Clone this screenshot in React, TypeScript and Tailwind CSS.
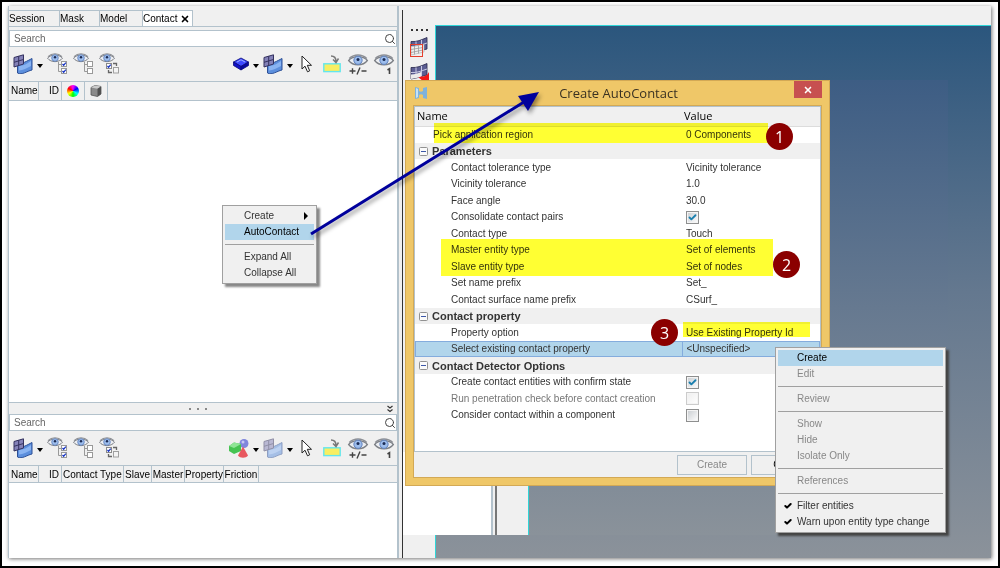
import React from "react";
import { Search, X, Check } from "lucide-react";

type Row = {
  kind: "pick" | "group" | "item";
  name: string;
  value?: string;
  check?: boolean;
  disabled?: boolean;
  selected?: boolean;
};

const rows: Row[] = [
  { kind: "pick", name: "Pick application region", value: "0 Components" },
  { kind: "group", name: "Parameters" },
  { kind: "item", name: "Contact tolerance type", value: "Vicinity tolerance" },
  { kind: "item", name: "Vicinity tolerance", value: "1.0" },
  { kind: "item", name: "Face angle", value: "30.0" },
  { kind: "item", name: "Consolidate contact pairs", check: true },
  { kind: "item", name: "Contact type", value: "Touch" },
  { kind: "item", name: "Master entity type", value: "Set of elements" },
  { kind: "item", name: "Slave entity type", value: "Set of nodes" },
  { kind: "item", name: "Set name prefix", value: "Set_" },
  { kind: "item", name: "Contact surface name prefix", value: "CSurf_" },
  { kind: "group", name: "Contact property" },
  { kind: "item", name: "Property option", value: "Use Existing Property Id" },
  { kind: "item", name: "Select existing contact property", value: "<Unspecified>", selected: true },
  { kind: "group", name: "Contact Detector Options" },
  { kind: "item", name: "Create contact entities with confirm state", check: true },
  { kind: "item", name: "Run penetration check before contact creation", check: false, disabled: true },
  { kind: "item", name: "Consider contact within a component", check: false },
];

/* ---------- icons ---------- */

function Mesh({ faded }: { faded?: boolean }) {
  return (
    <svg viewBox="0 0 20 20" className={faded ? "size-5 opacity-50" : "size-5"}>
      <path d="M4.500 8.500C9 10.500 14 7 19 4.500V16C14 17 9 21.500 4.500 19Z" fill="#5c8fdd" stroke="#2c4f96" />
      <path d="M6 11.500C10 12.500 14 9.500 18 7V12C14 14 10 16.500 6 16.500Z" fill="#8ab4f2" />
      <path d="M1 3.500 10.500 .8V10L1 13Z" fill="#8482b8" stroke="#34325f" />
      <path d="M5.700 2.200V11.500M1 8.300 10.500 5.500" stroke="#34325f" fill="none" />
    </svg>
  );
}

function Caret() {
  return (
    <svg viewBox="0 0 6 4" className="mt-1 h-1 w-1.5 shrink-0">
      <path d="M0 0H6L3 4Z" fill="#000" />
    </svg>
  );
}

function EyeShape() {
  return (
    <>
      <path d="M.5 5.200C4 1 12 1 15.500 5.200 12 9.800 4 9.800 .5 5.200Z" fill="#eceef2" stroke="#7d8086" />
      <path d="M1 3.600C5 -.2 11 -.2 15 3.600" fill="none" stroke="#8d9096" strokeWidth="1.200" />
      <circle cx="8" cy="5" r="3.300" fill="#9dbdec" stroke="#5c7fbd" strokeWidth=".8" />
      <circle cx="8" cy="4.300" r="1.200" fill="#1c2c55" />
    </>
  );
}

function EyeTree({ mode }: { mode: "on" | "off" | "swap" }) {
  return (
    <svg viewBox="0 0 22 22" className="h-[22px] w-[22px]">
      <EyeShape />
      {mode === "swap" ? (
        <>
          <rect x="7.500" y="10.500" width="5" height="5" fill="#fff" stroke="#8a8a8a" />
          <path d="M8.500 13 9.600 14.300 11.700 11.700" fill="none" stroke="#1633c4" strokeWidth="1.300" />
          <rect x="14.500" y="14.500" width="5" height="5.500" fill="#f4f4f4" stroke="#a0a0a0" />
          <path d="M14 10.500H17.500V13M13 19.500H9.500V17" fill="none" stroke="#666" strokeWidth="1.300" />
        </>
      ) : (
        <>
          <path d="M11.500 9V18.500M11.500 11.500H14M11.500 18.500H14" fill="none" stroke="#999" />
          <rect x="14.500" y="8.500" width="5" height="5" fill="#fff" stroke="#999" />
          <rect x="14.500" y="15.500" width="5" height="5" fill="#fff" stroke="#999" />
          {mode === "on" && (
            <path
              d="M15.500 11 16.700 12.300 18.800 9.700M15.500 18 16.700 19.300 18.800 16.700"
              fill="none"
              stroke="#1633c4"
              strokeWidth="1.300"
            />
          )}
        </>
      )}
    </svg>
  );
}

function EyeMark({ mark }: { mark: "pm" | "one" }) {
  return (
    <svg viewBox="0 0 22 22" className="h-[22px] w-[22px]">
      <g transform="translate(1 1) scale(1.25)">
        <EyeShape />
      </g>
      {mark === "pm" ? (
        <path d="M2.500 18H8.500M5.500 15.300V20.700M10 21.500 13 14.500M14.500 18H19.500" stroke="#444" strokeWidth="1.400" fill="none" />
      ) : (
        <path d="M14.500 17 16.500 15.700V21" stroke="#444" strokeWidth="1.600" fill="none" />
      )}
    </svg>
  );
}

function Block() {
  return (
    <svg viewBox="0 0 16 14" className="h-3.5 w-4">
      <path d="M.5 5 8 1 15.500 5 8 9.500Z" fill="#3d49ff" stroke="#0a0a78" strokeWidth=".8" />
      <path d="M.5 5V8.500L8 13V9.500Z" fill="#1212c8" stroke="#0a0a78" strokeWidth=".8" />
      <path d="M15.500 5V8.500L8 13V9.500Z" fill="#0808a0" stroke="#0a0a78" strokeWidth=".8" />
      <path d="M4 5 8 2.800 12 5" stroke="#a0b0ff" fill="none" />
    </svg>
  );
}

function Shapes() {
  return (
    <svg viewBox="0 0 20 20" className="size-5">
      <circle cx="15" cy="5.500" r="4.500" fill="#7f86dc" />
      <circle cx="14" cy="4" r="1.500" fill="#c3c7f4" />
      <path d="M0 8 5 4.500 12 6V13L5 16 0 13Z" fill="#46c352" />
      <path d="M0 8 5 4.500 12 6 5 10Z" fill="#8fe596" />
      <path d="M14 8.500 19 17.500C17 20.500 11 20.500 9 17.500Z" fill="#e8585f" />
    </svg>
  );
}

function Pointer() {
  return (
    <svg viewBox="0 0 12 18" className="h-[18px] w-3">
      <path d="M1 1V14L4 11.200 6.500 16.800 8.700 15.800 6.300 10.300H10.500Z" fill="#fff" stroke="#222" />
    </svg>
  );
}

function Drop() {
  return (
    <svg viewBox="0 0 18 18" className="size-[18px]">
      <rect x=".8" y="8.800" width="16.400" height="7.800" fill="#f8ee62" stroke="#63e6ee" strokeWidth="1.400" />
      <path d="M8 1C11 1 13 3 13 6.500M10 4.500 13 7.500 15.500 3.500" fill="none" stroke="#777" strokeWidth="1.500" />
    </svg>
  );
}

function Cube() {
  return (
    <svg viewBox="0 0 12 12" className="size-3">
      <path d="M1 2.500 5 .5 11 1.500V9L7.500 11.500 1 10Z" fill="#8a8a8a" stroke="#555" strokeWidth=".8" />
      <path d="M1 2.500 5 .5 11 1.500 7.500 3.800Z" fill="#cacaca" />
      <path d="M7.500 3.800 11 1.500V9L7.500 11.500Z" fill="#505050" />
    </svg>
  );
}

function StripMesh({ red }: { red?: boolean }) {
  return (
    <svg viewBox="0 0 20 20" className="size-5">
      <path d="M2 4.500C8 5 12 3 18 .5V12C13 13 9 15 2 16Z" fill="#5b5d92" stroke="#26264a" strokeWidth=".8" />
      <path d="M7 4.500V15M12.500 3V13.500M2 9.500C8 10 12 8 18 6" stroke="#c9cae4" fill="none" />
      {red ? (
        <>
          <path d="M2 11.500C6 11.500 9 10.500 12 9V14L2 16Z" fill="#ececec" />
          <path d="M20 9C18 13 15 14 12 13.500L9.500 14.500 14 18H20V9Z" fill="#f01818" />
        </>
      ) : (
        <>
          <path d="M2 9.500C6 9.500 10 8.500 15 7V15L2 18Z" fill="#f0f0f0" stroke="#aaa" strokeWidth=".6" />
          <path d="M2 12.500 14 10.500M2 15.500 14 13M5.500 9V17.500M9.500 8.500V16.500" stroke="#9a9a9a" strokeWidth=".8" fill="none" />
          <rect x="1.500" y="7.500" width="12" height="12" fill="none" stroke="#e5402d" />
        </>
      )}
    </svg>
  );
}

/* ---------- browser panel ---------- */

function SearchBox({ id }: { id: string }) {
  return (
    <div className="flex h-[17px] items-center border border-[#b3c2cc] bg-white">
      <input
        id={id}
        aria-label="Search"
        placeholder="Search"
        className="h-full min-w-0 flex-1 bg-transparent px-1 text-[10px] text-black outline-none placeholder:text-[#666]"
      />
      <Search className="size-3 text-[#444]" />
    </div>
  );
}

function Tools({ second }: { second?: boolean }) {
  return (
    <div className="flex h-[34px] items-center pr-0.5 pl-1">
      <button aria-label="Components" className="mr-1 flex items-center gap-1">
        <Mesh />
        <Caret />
      </button>
      <div className="flex gap-1">
        <button aria-label="Show all"><EyeTree mode="on" /></button>
        <button aria-label="Hide all"><EyeTree mode="off" /></button>
        <button aria-label="Reverse"><EyeTree mode="swap" /></button>
      </div>
      <div className="ml-auto flex items-center">
        <button aria-label="Entity" className="flex items-center gap-1">
          {second ? <Shapes /> : <Block />}
          <Caret />
        </button>
        <button aria-label="Mesh" className="ml-1 flex items-center gap-1">
          <Mesh faded={second} />
          <Caret />
        </button>
        <button aria-label="Select" className="ml-2"><Pointer /></button>
        <button aria-label="Add" className="ml-2.5"><Drop /></button>
        <button aria-label="Show or hide" className="ml-1.5"><EyeMark mark="pm" /></button>
        <button aria-label="Isolate" className="ml-1"><EyeMark mark="one" /></button>
      </div>
    </div>
  );
}

function Browser() {
  return (
    <div className="flex w-[391px] shrink-0 flex-col border-r-2 border-l border-[#b3c2cc] pt-1">
      <div className="flex h-4 text-[10px] leading-4">
        <button className="w-[51px] border-t border-r border-[#b3c2cc] text-left">Session</button>
        <button className="w-10 border-t border-r border-[#b3c2cc] text-left">Mask</button>
        <button className="w-[43px] border-t border-r border-[#b3c2cc] text-left">Model</button>
        <button className="flex w-[50px] items-center justify-between border-t border-r border-[#b3c2cc] bg-white pr-0.5">
          Contact <X className="size-2.5 shrink-0" strokeWidth={4} />
        </button>
      </div>
      <div className="mb-[3px] border-b border-[#b3c2cc]" />
      <SearchBox id="search-top" />
      <Tools />
      <div className="flex h-5 border-y border-[#b3c2cc] text-[10px] leading-[18px]">
        <div className="w-[30px] border-r border-[#b3c2cc] pl-0.5">Name</div>
        <div className="w-[23px] border-r border-[#b3c2cc] pr-0.5 text-right">ID</div>
        <div className="flex w-[23px] items-center justify-center border-r border-[#b3c2cc]">
          <span className="size-3 rounded-full bg-[conic-gradient(#f0f,#00f,#0ff,#0f0,#ff0,#f00,#f0f)]" />
        </div>
        <div className="flex w-[23px] items-center justify-center border-r border-[#b3c2cc]"><Cube /></div>
      </div>
      <div className="flex-1 bg-white" />
      <div className="flex h-3 items-center border-t border-[#b3c2cc]">
        <span className="flex flex-1 justify-center gap-1.5">
          <i className="size-0.5 bg-[#888]" />
          <i className="size-0.5 bg-[#888]" />
          <i className="size-0.5 bg-[#888]" />
        </span>
        <svg viewBox="0 0 6 8" className="mr-1 h-2 w-1.5">
          <path d="M.5 1 3 3 5.500 1M.5 4.500 3 6.500 5.500 4.500" stroke="#333" strokeWidth="1.200" fill="none" />
        </svg>
      </div>
      <SearchBox id="search-bottom" />
      <Tools second />
      <div className="flex h-[18px] border-y border-[#b3c2cc] text-[10px] leading-[18px]">
        <div className="w-[30px] border-r border-[#b3c2cc] pl-0.5">Name</div>
        <div className="w-[23px] border-r border-[#b3c2cc] pr-0.5 text-right">ID</div>
        <div className="w-[62px] border-r border-[#b3c2cc] pl-px whitespace-nowrap">Contact Type</div>
        <div className="w-7 border-r border-[#b3c2cc] text-center">Slave</div>
        <div className="w-[33px] border-r border-[#b3c2cc] text-center">Master</div>
        <div className="w-[39px] border-r border-[#b3c2cc] text-center">Property</div>
        <div className="w-[35px] border-r border-[#b3c2cc] text-center">Friction</div>
      </div>
      <div className="h-[75px] bg-white" />
    </div>
  );
}

/* ---------- dialog ---------- */

function Tick({ row }: { row: Row }) {
  return (
    <input
      type="checkbox"
      aria-label={row.name}
      defaultChecked={row.check}
      disabled={row.disabled}
      className="block size-[13px] appearance-none border border-[#8e8f8f] bg-linear-to-br from-[#c8ccd0] to-white shadow-[inset_0_0_0_1px_#f4f4f4] disabled:border-[#ccc] disabled:from-[#eee]"
    />
  );
}

function PropertyRow({ row }: { row: Row }) {
  if (row.kind === "group") {
    return (
      <tr className="bg-[#f0f0f0] odd:h-[17px] even:h-4">
        <th colSpan={2} className="p-0 text-left text-[11px] leading-4 font-bold">
          <span className="flex items-center gap-1 pl-1">
            <svg viewBox="0 0 9 9" className="size-[9px]">
              <rect x=".5" y=".5" width="8" height="8" rx="1" fill="#fafafa" stroke="#919191" />
              <path d="M2 4.500H7" stroke="#3c57a8" />
            </svg>
            {row.name}
          </span>
        </th>
      </tr>
    );
  }
  return (
    <tr className={row.selected ? "bg-[#b1d5eb] outline -outline-offset-1 outline-[#84acdd] odd:h-[17px] even:h-4" : "odd:h-[17px] even:h-4"}>
      <td className={row.kind === "pick" ? "p-0 pl-[18px]" : row.disabled ? "p-0 pl-9 text-[#777]" : "p-0 pl-9"}>{row.name}</td>
      <td className={row.selected ? "border-l border-[#84acdd] p-0 pl-1" : "p-0 pl-1"}>
        {row.check === undefined ? (
          row.value
        ) : (
          <span className="relative block w-[13px]">
            <Tick row={row} />
            {row.check && <Check className="pointer-events-none absolute inset-0.5 size-[9px] text-[#1b7fae]" strokeWidth={5} />}
          </span>
        )}
      </td>
    </tr>
  );
}

function Dialog() {
  return (
    <div className="absolute top-[78px] left-[403px] z-10 w-[425px] border border-[#d3a955] bg-[#efc768] px-[7px] pb-[7px]">
      <div className="flex h-6">
        <svg viewBox="0 0 12 12" className="mt-1.5 ml-0.5 size-3">
          <path d="M0 0 4 1V4C5.500 5 6.500 5 8 4V1L12 0V12L8 11V8C6.500 7 5.500 7 4 8V11L0 12Z" fill="#7fb2dc" />
          <path d="M1 1 3 2V10L1 11Z" fill="#c7e2f5" />
        </svg>
        <h1 className="flex-1 pl-4 text-center font-['Open_Sans',sans-serif] text-[13px] leading-6 text-[#3a3222]">
          Create AutoContact
        </h1>
        <button aria-label="Close" className="flex h-[17px] w-7 items-center justify-center bg-[#c75050] text-white">
          <X className="size-2.5" strokeWidth={4} />
        </button>
      </div>
      <div className="border border-[#d3a955] bg-[#f0f0f0]">
        <div className="h-[346px] border border-[#b3c2cc] bg-white">
          <table className="w-full table-fixed border-collapse text-[10px] leading-4 whitespace-nowrap text-[#333]">
            <thead>
              <tr className="h-[19px] border-b border-[#dcdcdc] bg-[#f0f0f0] font-['Open_Sans',sans-serif] text-[11px] text-black">
                <th className="w-[267px] p-0 pl-0.5 text-left font-normal">Name</th>
                <th className="p-0 pl-0.5 text-left font-normal">Value</th>
              </tr>
            </thead>
            <tbody>
              {rows.map((row) => (
                <PropertyRow key={row.name} row={row} />
              ))}
            </tbody>
          </table>
        </div>
        <div className="flex h-[25px] items-center justify-end gap-1">
          <button disabled className="h-5 w-[70px] border border-[#b3c2cc] text-[10px] text-[#888]">Create</button>
          <button className="h-5 w-[70px] border border-[#b3c2cc] text-[10px]">Close</button>
        </div>
      </div>
    </div>
  );
}

/* ---------- menus ---------- */

function MenuItem({ label, active, disabled, checked, arrow }: {
  label: string;
  active?: boolean;
  disabled?: boolean;
  checked?: boolean;
  arrow?: boolean;
}) {
  return (
    <button
      disabled={disabled}
      className={
        active
          ? "flex w-full items-center bg-[#b1d5eb] text-left text-black"
          : "flex w-full items-center text-left text-[#333] disabled:text-[#888]"
      }
    >
      <span className="flex w-[19px] justify-center">
        {checked && <Check className="size-2 text-black" strokeWidth={6} />}
      </span>
      <span className="flex-1 leading-4">{label}</span>
      {arrow && (
        <svg viewBox="0 0 4 8" className="mr-1.5 h-2 w-1">
          <path d="M0 0 4 4 0 8Z" fill="#000" />
        </svg>
      )}
    </button>
  );
}

const Line = () => <hr className="my-1 border-[#a0a0a0]" />;

function Badge({ n, place }: { n: number; place: string }) {
  return (
    <span
      className={`absolute z-30 flex size-[27px] items-center justify-center rounded-full bg-[#8b0000] font-['Open_Sans',sans-serif] text-base text-white ${place}`}
    >
      {n}
    </span>
  );
}

export default function App() {
  return (
    <div className="relative flex min-h-screen border-2 border-black bg-white pt-1 pr-[7px] pb-2 pl-1.5 font-['Liberation_Sans',sans-serif] text-black">
      <div className="flex flex-1 bg-[#f0f0f0] shadow-[1px_1px_4px_#777]">
        <Browser />
        <div className="mt-1 ml-px w-[3px] border-r border-[#333]" />
        <div className="flex w-8 shrink-0 flex-col items-center gap-1.5 pt-[23px]">
          <span className="flex gap-[3px]">
            <i className="size-0.5 bg-[#333]" />
            <i className="size-0.5 bg-[#333]" />
            <i className="size-0.5 bg-[#333]" />
            <i className="size-0.5 bg-[#333]" />
          </span>
          <button aria-label="Mesh window"><StripMesh /></button>
          <button aria-label="Mesh flip"><StripMesh red /></button>
        </div>
        <div className="mt-[19px] flex-1 border-t border-l border-[#2fd6d8] bg-linear-to-b from-[#2b567d] via-[#64788f] to-[#8b929a]" />
      </div>

      {/* second window showing from under the dialog */}
      <div className="absolute top-[78px] left-[527px] h-[455px] w-[419px] bg-linear-to-b from-[#3d5d84] via-[#667990] to-[#8a929a]" />
      <div className="absolute top-[370px] left-[401px] flex h-[163px] w-[126px] bg-[#f0f0f0]">
        <div className="mt-20 flex-1 bg-white" />
        <div className="w-1.5 border-r-2 border-l-2 border-r-[#777] border-l-[#b3c2cc]" />
        <div className="w-8 border-r border-[#2fd6d8]" />
      </div>

      <Dialog />

      <div className="absolute top-[121px] left-[432px] z-20 h-5 w-[334px] bg-[#ffff33] mix-blend-multiply" />
      <div className="absolute top-[237px] left-[439px] z-20 h-[37px] w-[332px] bg-[#ffff33] mix-blend-multiply" />
      <div className="absolute top-[320px] left-[681px] z-20 h-[15px] w-[127px] bg-[#ffff33] mix-blend-multiply" />

      <div className="absolute top-[203px] left-[220px] z-20 w-[95px] border border-[#a0a0a0] bg-[#f0f0f0] px-0.5 py-0.5 text-[10px] shadow-[3px_3px_2px_#888]">
        <MenuItem label="Create" arrow />
        <MenuItem label="AutoContact" active />
        <Line />
        <MenuItem label="Expand All" />
        <MenuItem label="Collapse All" />
      </div>

      <div className="absolute top-[345px] left-[773px] z-20 w-[171px] border border-[#a0a0a0] bg-[#f0f0f0] p-0.5 text-[10px] shadow-[3px_3px_2px_#444]">
        <MenuItem label="Create" active />
        <MenuItem label="Edit" disabled />
        <Line />
        <MenuItem label="Review" disabled />
        <Line />
        <MenuItem label="Show" disabled />
        <MenuItem label="Hide" disabled />
        <MenuItem label="Isolate Only" disabled />
        <Line />
        <MenuItem label="References" disabled />
        <Line />
        <MenuItem label="Filter entities" checked />
        <MenuItem label="Warn upon entity type change" checked />
      </div>

      <Badge n={1} place="top-[121px] left-[764px]" />
      <Badge n={2} place="top-[249px] left-[771px]" />
      <Badge n={3} place="top-[317px] left-[649px]" />

      <svg viewBox="0 0 250 160" className="pointer-events-none absolute top-[83px] left-[300px] z-30 h-40 w-[250px] drop-shadow-[2px_3px_2px_#0006]">
        <path d="M9 149 222 17" stroke="#00009c" strokeWidth="3" />
        <path d="M237 7 216 11 226 26Z" fill="#00009c" />
      </svg>
    </div>
  );
}
